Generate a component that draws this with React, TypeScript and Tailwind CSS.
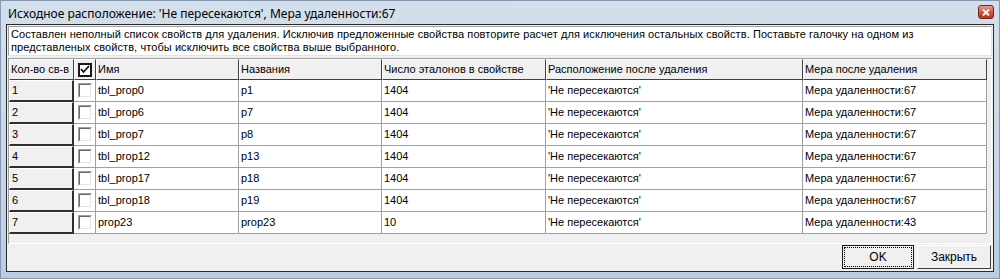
import React from "react";

const rows = [
  ["1", "tbl_prop0", "p1", "1404", "'Не пересекаются'", "Мера удаленности:67"],
  ["2", "tbl_prop6", "p7", "1404", "'Не пересекаются'", "Мера удаленности:67"],
  ["3", "tbl_prop7", "p8", "1404", "'Не пересекаются'", "Мера удаленности:67"],
  ["4", "tbl_prop12", "p13", "1404", "'Не пересекаются'", "Мера удаленности:67"],
  ["5", "tbl_prop17", "p18", "1404", "'Не пересекаются'", "Мера удаленности:67"],
  ["6", "tbl_prop18", "p19", "1404", "'Не пересекаются'", "Мера удаленности:67"],
  ["7", "prop23", "prop23", "10", "'Не пересекаются'", "Мера удаленности:43"],
];

const tahoma = { fontFamily: "'Liberation Sans', Arial, sans-serif" };

function Box() {
  return (
    <div className="w-[14px] h-[15px] border-t border-l border-[#a0a0a0] border-b border-r border-b-white border-r-white">
      <div className="w-full h-full border-t border-l border-[#696969] border-b border-r border-b-[#e3e3e3] border-r-[#e3e3e3] bg-white" />
    </div>
  );
}

function HeaderCell({ w, children }: { w: string; children?: React.ReactNode }) {
  return (
    <div className={`${w} h-full shrink-0 bg-[#f0f0f0] border-t border-l border-white border-r border-b border-r-[#404040] border-b-[#404040] flex items-center pl-[1px] text-[11px] text-black whitespace-nowrap overflow-hidden`}>
      {children}
    </div>
  );
}

export default function App() {
  const dataW = ["w-[143px]", "w-[143px]", "w-[164px]", "w-[257px]", "w-[184px]"];
  return (
    <div
      className="w-[1000px] h-[279px] flex flex-col bg-gradient-to-b from-[#d3dfeb] via-[#cbd9e8] to-[#b9cde2] border border-[#8598b0]"
      style={{ fontFamily: "'Liberation Sans', Arial, sans-serif" }}
    >
      {/* title bar */}
      <div className="h-[23px] shrink-0 flex items-center justify-between pl-[7px] pr-[5px]">
        <div className="text-[12px] text-black pt-[2px]" style={{ fontFamily: "'Noto Sans', sans-serif" }}>
          Исходное расположение: 'Не пересекаются', Мера удаленности:67
        </div>
        <div className="w-[16px] h-[14px] rounded-[3px] border border-[#6d2a20] bg-gradient-to-b from-[#e8a08f] via-[#d2553e] to-[#c0321c] flex items-center justify-center mb-[1px]">
          <svg width="8" height="7" viewBox="0 0 8 7">
            <path d="M1 0.5 L7 6.5 M7 0.5 L1 6.5" stroke="#ffffff" strokeWidth="1.8" />
          </svg>
        </div>
      </div>
      {/* client area */}
      <div className="flex-1 mx-[5px] mb-[6px] border border-[#2a2a2a] bg-[#f0f0f0] flex flex-col" style={tahoma}>
        <div className="mx-[1px] mt-[1px] h-[30px] border border-[#a0a0a0] bg-white border-b-[#e3e3e3] border-r-[#e3e3e3]">
          <div className="pl-[2px] pt-[1px] text-[11px] leading-[13px] text-black tracking-[0.08px] whitespace-nowrap">
            <div>
              Составлен неполный список свойств для удаления. Исключив предложенные свойства повторите расчет для исключения остальных свойств. Поставьте галочку на одном из
            </div>
            <div>представленых свойств, чтобы исключить все свойства выше выбранного.</div>
          </div>
        </div>
        {/* grid */}
        <div className="mx-[1px] mt-[2px] h-[186px] border border-[#a0a0a0] border-b-white border-r-white flex flex-col bg-[#f0f0f0] overflow-hidden">
          <div className="flex h-[21px] shrink-0">
            <HeaderCell w="w-[65px]">Кол-во св-в</HeaderCell>
            <div className="w-[22px] h-full shrink-0 bg-[#f0f0f0] border-t border-l border-white border-r border-b border-r-[#404040] border-b-[#404040] flex items-center justify-center">
              <div className="w-[14px] h-[14px] border-2 border-[#1a1a1a] bg-white flex items-center justify-center">
                <svg width="10" height="9" viewBox="0 0 10 9">
                  <path d="M1 4 L3.5 7 L9 1" stroke="#111" strokeWidth="1.8" fill="none" />
                </svg>
              </div>
            </div>
            <HeaderCell w="w-[143px]">Имя</HeaderCell>
            <HeaderCell w="w-[143px]">Названия</HeaderCell>
            <HeaderCell w="w-[164px]">Число эталонов в свойстве</HeaderCell>
            <HeaderCell w="w-[257px]">Расположение после удаления</HeaderCell>
            <HeaderCell w="w-[184px]">Мера после удаления</HeaderCell>
          </div>
          {rows.map((r) => (
            <div key={r[0]} className="flex h-[22px] shrink-0">
              <div className="w-[65px] shrink-0 bg-[#f0f0f0] border-t border-l border-white border-r-2 border-b-2 border-r-[#303030] border-b-[#303030] text-[11px] pl-[2px] flex items-center">
                {r[0]}
              </div>
              <div className="w-[22px] shrink-0 bg-white border-r border-b border-[#a0a0a0] flex items-start justify-center pt-[3px]">
                <Box />
              </div>
              {r.slice(1).map((c, i) => (
                <div
                  key={i}
                  className={`${dataW[i]} shrink-0 bg-white border-r border-b border-[#a0a0a0] text-[11px] pl-[2px] flex items-center whitespace-nowrap overflow-hidden`}
                >
                  {c}
                </div>
              ))}
            </div>
          ))}
          <div className="flex-1 flex">
            <div className="w-[1px] bg-[#f0f0f0]" />
          </div>
        </div>
        {/* buttons */}
        <div className="flex-1 flex justify-end items-start pt-[1px] pr-[2px] gap-[3px]">
          <div className="w-[72px] h-[24px] border border-[#1a1a1a] bg-[#f0f0f0] p-[1px]">
            <div className="w-full h-full border border-dotted border-black flex items-center justify-center text-[12px]">
              OK
            </div>
          </div>
          <div className="w-[74px] h-[24px] border border-white border-r-[#404040] border-b-[#404040] bg-[#f0f0f0] flex items-center justify-center text-[12px]">
            Закрыть
          </div>
        </div>
      </div>
    </div>
  );
}
